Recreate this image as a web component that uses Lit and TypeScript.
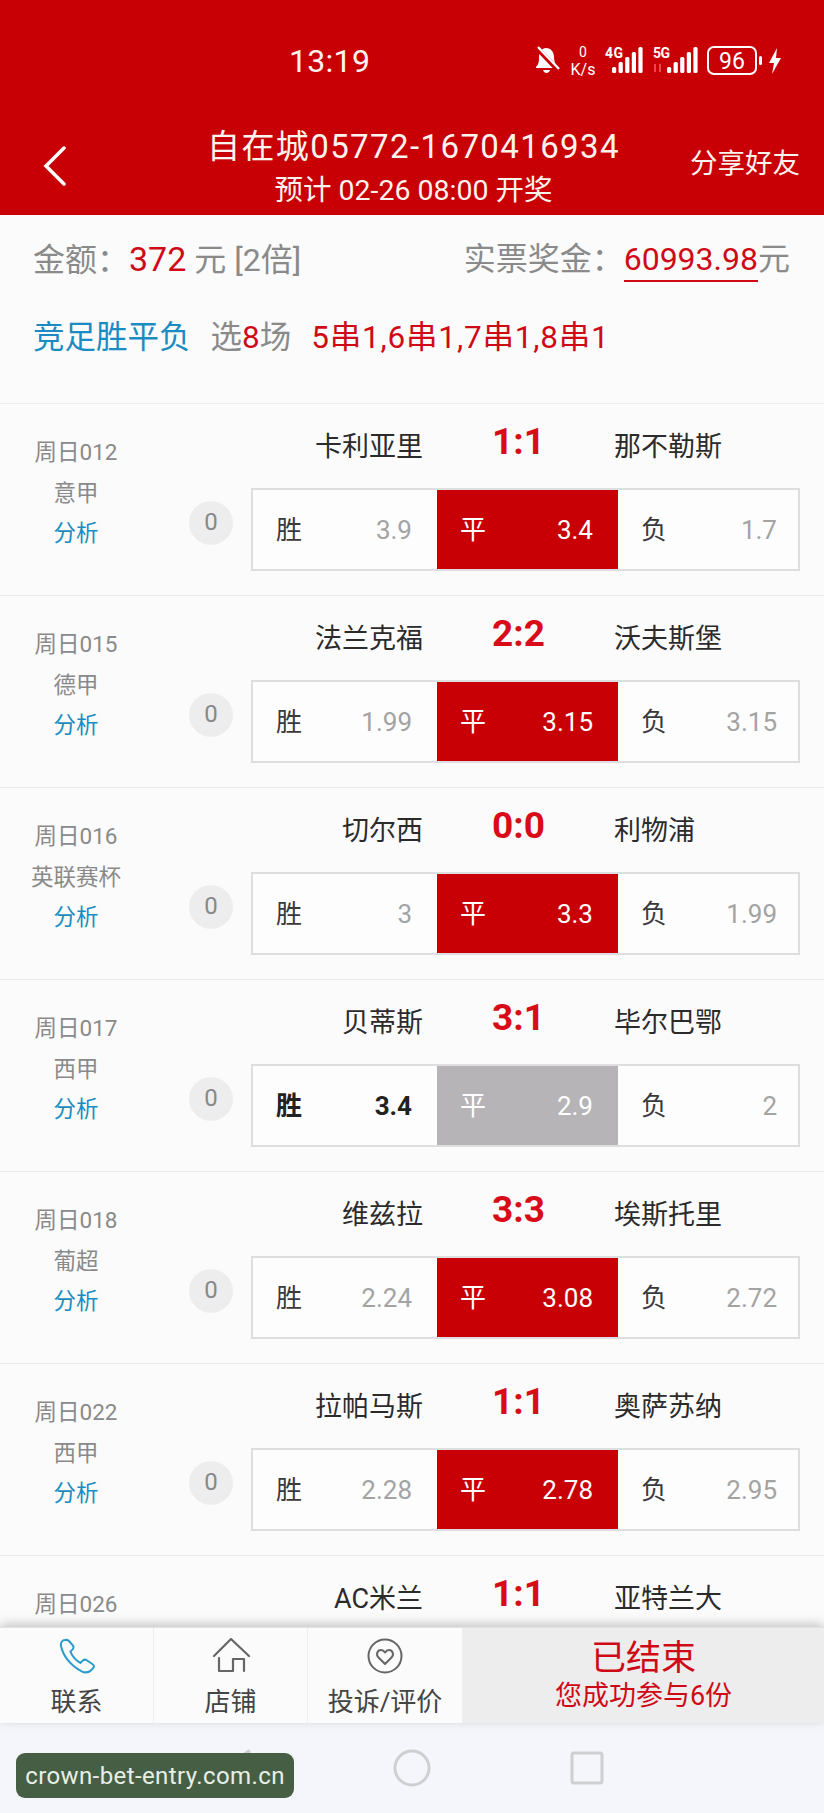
import { LitElement, html, css, svg } from 'lit';
import { customElement } from 'lit/decorators.js';
import { classMap } from 'lit/directives/class-map.js';

interface Match {
  no: string;
  league?: string;
  home: string;
  score: string;
  away: string;
  odds?: [string, string, string];
  muted?: boolean;
}

// last row is cut by the footer, only its top line shows
const MATCHES: Match[] = [
  { no: '周日012', league: '意甲', home: '卡利亚里', score: '1:1', away: '那不勒斯', odds: ['3.9', '3.4', '1.7'] },
  { no: '周日015', league: '德甲', home: '法兰克福', score: '2:2', away: '沃夫斯堡', odds: ['1.99', '3.15', '3.15'] },
  { no: '周日016', league: '英联赛杯', home: '切尔西', score: '0:0', away: '利物浦', odds: ['3', '3.3', '1.99'] },
  { no: '周日017', league: '西甲', home: '贝蒂斯', score: '3:1', away: '毕尔巴鄂', odds: ['3.4', '2.9', '2'], muted: true },
  { no: '周日018', league: '葡超', home: '维兹拉', score: '3:3', away: '埃斯托里', odds: ['2.24', '3.08', '2.72'] },
  { no: '周日022', league: '西甲', home: '拉帕马斯', score: '1:1', away: '奥萨苏纳', odds: ['2.28', '2.78', '2.95'] },
  { no: '周日026', home: 'AC米兰', score: '1:1', away: '亚特兰大' },
];

const signal = (heights: number[]) => svg`
  ${heights.map((h, i) => svg`<rect x=${i * 6.6} y=${26 - h} width="4.2" height=${h} rx="1.5" fill="#fff" />`)}
`;

@customElement('app-root')
export class AppRoot extends LitElement {
  static styles = css`
    :host {
      display: block;
      width: 824px;
      height: 1813px;
      overflow: hidden;
      font-family: Roboto, 'Noto Sans CJK SC', sans-serif;
      background: #f5f6fb;
      position: relative;
    }
    .page {
      height: 1813px;
      display: flex;
      flex-direction: column;
    }

    .header {
      height: 215px;
      flex: none;
      background: #c80006;
      color: #fdf3ee;
      box-sizing: border-box;
      padding-top: 43px;
    }
    .status {
      height: 36px;
      display: flex;
      align-items: center;
      padding-left: 289px;
    }
    .time {
      font-size: 32px;
      width: 246px;
      letter-spacing: 0.3px;
    }
    .status-icons {
      display: block;
    }
    .nav {
      display: grid;
      grid-template-columns: 110px 1fr 110px;
      margin-top: 46px;
      align-items: center;
    }
    .back {
      display: block;
      margin-left: 43px;
    }
    .title {
      text-align: center;
      line-height: 44px;
      padding-left: 3px;
    }
    .title-main {
      font-size: 33px;
      letter-spacing: 1.4px;
      white-space: nowrap;
    }
    .title-sub {
      font-size: 28.5px;
      line-height: 30px;
      margin-top: 7px;
      white-space: nowrap;
    }
    .share {
      font-size: 27.5px;
      white-space: nowrap;
      margin-left: -24px;
      margin-top: -10px;
    }

    .main {
      flex: 1;
      min-height: 0;
      overflow: hidden;
      background: #fbfbfc;
    }
    .summary {
      height: 189px;
      box-sizing: border-box;
      padding: 23px 34px 0 33px;
      border-bottom: 1px solid #eee;
      color: #8a8a8a;
    }
    .amounts {
      display: flex;
      justify-content: space-between;
      font-size: 32px;
      line-height: 42px;
      white-space: nowrap;
    }
    .red {
      color: #cf0a17;
    }
    .big {
      font-size: 34px;
    }
    .prize {
      color: #cf0a17;
      border-bottom: 2px solid #cf0a17;
      padding-bottom: 2px;
    }
    .plays {
      margin-top: 35px;
      font-size: 31.5px;
      line-height: 44px;
      white-space: nowrap;
      display: flex;
    }
    .kind {
      color: #1a8cc1;
      margin-right: 20px;
    }
    .picked {
      margin-right: 20px;
    }
    .series {
      letter-spacing: 0.8px;
    }

    .row {
      height: 192px;
      box-sizing: border-box;
      border-bottom: 1px solid #e9e9ec;
      display: grid;
      grid-template-columns: 152px 99px 549px;
      grid-template-rows: 84px 83px;
    }
    .meta {
      grid-row: 1 / 3;
      text-align: center;
      padding-top: 33px;
      color: #8a8a8a;
      font-size: 22.5px;
      line-height: 30px;
    }
    .league {
      margin-top: 11px;
    }
    .analyse {
      margin-top: 10px;
      color: #1a8cc1;
    }
    .teams {
      grid-column: 2 / 4;
      display: grid;
      grid-template-columns: 271px 191px 1fr;
      align-items: center;
      margin-left: -152px;
      padding-left: 152px;
      padding-top: 9px;
      height: 62px;
      font-size: 27px;
      color: #2b2b2b;
    }
    .home {
      text-align: right;
      white-space: nowrap;
    }
    .score {
      text-align: center;
      color: #d70c18;
      font-size: 37px;
      font-weight: 700;
      margin-top: -5px;
    }
    .bet {
      grid-column: 2;
      grid-row: 2;
      display: flex;
      padding: 13px 0 0 37px;
    }
    .bet span {
      width: 44px;
      height: 44px;
      border-radius: 50%;
      background: #ededee;
      color: #888;
      font-size: 24px;
      line-height: 42px;
      text-align: center;
    }
    .odds {
      grid-column: 3;
      grid-row: 2;
      display: grid;
      grid-template-columns: 184px 181px 184px;
      box-sizing: border-box;
      border: 2px solid #dedee0;
      background: #fdfdfe;
    }
    .cell {
      display: flex;
      justify-content: space-between;
      align-items: center;
      padding: 0 25px 0 23px;
      font-size: 26px;
      color: #3a3a3a;
    }
    .label {
      margin-top: -4px;
    }
    .cell .val {
      color: #a3a3a3;
    }
    .cell.hit {
      background: #c80006;
      color: #fff;
    }
    .cell.hit .val {
      color: #fff;
    }
    .cell.gray {
      background: #b7b4b7;
      color: #fff;
    }
    .cell.gray .val {
      color: #fff;
    }
    .cell.strong,
    .cell.strong .val {
      color: #222;
      font-weight: 700;
    }

    .tabs {
      flex: none;
      height: 96px;
      display: grid;
      grid-template-columns: 154px 154px 155px 1fr;
      background: #fbfbfc;
      position: relative;
      box-shadow: 0 -3px 10px rgba(0, 0, 0, 0.22);
      border-top: 1px solid #e3e3e5;
      box-sizing: border-box;
    }
    .tab {
      display: flex;
      flex-direction: column;
      align-items: center;
      padding-top: 10px;
      font-size: 26px;
      line-height: 34px;
      color: #444;
      white-space: nowrap;
      border-right: 1px solid #eeeef0;
    }
    .tab svg {
      display: block;
      margin-bottom: 11px;
    }
    .ended {
      background: #eeeded;
      text-align: center;
      color: #cf0a17;
      padding-top: 11px;
    }
    .ended-main {
      font-size: 35px;
      line-height: 40px;
    }
    .ended-sub {
      font-size: 27px;
      line-height: 32px;
      margin-top: 1px;
    }

    .sysnav {
      flex: none;
      height: 90px;
      background: #f5f6fb;
      display: flex;
      align-items: center;
      padding-left: 219px;
      box-sizing: border-box;
    }
    .sysnav svg {
      display: block;
    }
    .sysnav .circle {
      margin-left: 142px;
    }
    .sysnav .square {
      margin-left: 139px;
    }

    .mark {
      position: absolute;
      left: 16px;
      top: 1753px;
      width: 278px;
      height: 45px;
      border-radius: 9px;
      background: #465f44;
      color: #e8efe6;
      font-size: 24px;
      line-height: 47px;
      text-align: center;
      letter-spacing: 0.4px;
      white-space: nowrap;
    }
  `;

  private statusIcons() {
    return html`
      <svg class="status-icons" width="250" height="38" viewBox="0 -4 250 38">
        <path d="M11 2c5 0 8 4 8 9 0 4 1 7 4 10v1H1v-1c3-3 3-6 3-10 0-5 3-9 7-9zM8 24h7c-.5 2-2 3-3.500 3S8.500 26 8 24z" fill="#fff" />
        <path d="M2 2 24 25" stroke="#c80006" stroke-width="5" />
        <path d="M3 1 24 23" stroke="#fff" stroke-width="2.400" />
        <text x="48" y="11" font-size="14" text-anchor="middle" fill="#fff">0</text>
        <text x="48" y="29" font-size="16" text-anchor="middle" fill="#fff">K/s</text>
        <text x="70" y="12" font-size="14" font-weight="700" fill="#fff" textLength="18">4G</text>
        <g transform="translate(77 1)">${signal([6, 11, 16, 21, 26])}</g>
        <text x="118" y="12" font-size="14" font-weight="700" fill="#fff" textLength="17">5G</text>
        <path d="M120 18v8M125 18v8" stroke="#f0606a" stroke-width="1.500" />
        <g transform="translate(132 1)">${signal([6, 11, 16, 21, 26])}</g>
        <rect x="173" y="1" width="48" height="27" rx="6" fill="none" stroke="#fff" stroke-width="2" />
        <text x="197" y="23" font-size="23" text-anchor="middle" fill="#fff">96</text>
        <rect x="224" y="10" width="3" height="9" rx="1.500" fill="#fff" />
        <path d="M242 2l-8 15h5l-2 11 9-16h-5z" fill="#fff" />
      </svg>
    `;
  }

  private renderRow(m: Match) {
    return html`
      <div class="row">
        <div class="meta">
          <div>${m.no}</div>
          ${m.league
            ? html`<div class="league">${m.league}</div>
                <div class="analyse">分析</div>`
            : ''}
        </div>
        <div class="teams">
          <div class="home">${m.home}</div>
          <div class="score">${m.score}</div>
          <div class="away">${m.away}</div>
        </div>
        ${m.odds
          ? html`
              <div class="bet"><span>0</span></div>
              <div class="odds">
                <div class=${classMap({ cell: true, strong: !!m.muted })}>
                  <span class="label">胜</span><span class="val">${m.odds[0]}</span>
                </div>
                <div class=${classMap({ cell: true, hit: !m.muted, gray: !!m.muted })}>
                  <span class="label">平</span><span class="val">${m.odds[1]}</span>
                </div>
                <div class="cell"><span class="label">负</span><span class="val">${m.odds[2]}</span></div>
              </div>
            `
          : ''}
      </div>
    `;
  }

  render() {
    return html`
      <div class="page">
        <header class="header">
          <div class="status">
            <div class="time">13:19</div>
            ${this.statusIcons()}
          </div>
          <div class="nav">
            <svg class="back" width="24" height="40" viewBox="0 0 24 40">
              <path d="M21 2 3 20l18 18" fill="none" stroke="#fff" stroke-width="3.500" stroke-linecap="round" />
            </svg>
            <div class="title">
              <div class="title-main">自在城05772-1670416934</div>
              <div class="title-sub">预计 02-26 08:00 开奖</div>
            </div>
            <div class="share">分享好友</div>
          </div>
        </header>

        <main class="main">
          <section class="summary">
            <div class="amounts">
              <div>金额：<span class="red big">372</span> 元 [2倍]</div>
              <div>实票奖金：<span class="prize">60993.98</span>元</div>
            </div>
            <div class="plays">
              <span class="kind">竞足胜平负</span>
              <span class="picked">选<span class="red">8</span>场</span>
              <span class="red series">5串1,6串1,7串1,8串1</span>
            </div>
          </section>
          ${MATCHES.map((m) => this.renderRow(m))}
        </main>

        <footer class="tabs">
          <div class="tab">
            <svg width="40" height="36" viewBox="48 24 120 108">
              <path d="M72 30C64 30 58 38 60 48 66 78 90 108 122 124 134 130 148 126 158 112 160 108 158 105 154 102L136 90C132 88 128 89 125 92L118 99C106 92 94 78 88 65L95 58C98 54 98 50 96 47L84 33C80 30 76 29 72 30Z" fill="none" stroke="#2a9ccb" stroke-width="6" stroke-linejoin="round" />
            </svg>
            联系
          </div>
          <div class="tab">
            <svg width="40" height="36" viewBox="211 1638 40 36">
              <path d="M214 1656 231 1639 249 1656M219 1658V1671H233V1659H244V1671" fill="none" stroke="#666" stroke-width="2.200" stroke-linecap="round" stroke-linejoin="round" />
            </svg>
            店铺
          </div>
          <div class="tab">
            <svg width="40" height="36" viewBox="365 1638 40 36">
              <circle cx="385" cy="1656" r="16.500" fill="none" stroke="#666" stroke-width="2" />
              <path d="M385 1664l-6.500-6.500c-3-3-1-7.500 2.500-7.500 2 0 3 1 4 2.500 1-1.500 2-2.500 4-2.500 3.500 0 5.500 4.500 2.500 7.500z" fill="none" stroke="#666" stroke-width="2" stroke-linejoin="round" />
            </svg>
            投诉/评价
          </div>
          <div class="ended">
            <div class="ended-main">已结束</div>
            <div class="ended-sub">您成功参与6份</div>
          </div>
        </footer>

        <div class="sysnav">
          <svg width="32" height="38" viewBox="0 0 32 38">
            <path d="M30 2 3 19l27 17z" fill="none" stroke="#cfcfd2" stroke-width="3" stroke-linejoin="round" />
          </svg>
          <svg class="circle" width="38" height="38" viewBox="0 0 38 38">
            <circle cx="19" cy="19" r="17" fill="none" stroke="#cfcfd2" stroke-width="3" />
          </svg>
          <svg class="square" width="34" height="34" viewBox="0 0 34 34">
            <rect x="2" y="2" width="30" height="30" rx="2" fill="none" stroke="#cfcfd2" stroke-width="3" />
          </svg>
        </div>
      </div>
      <div class="mark">crown-bet-entry.com.cn</div>
    `;
  }
}
